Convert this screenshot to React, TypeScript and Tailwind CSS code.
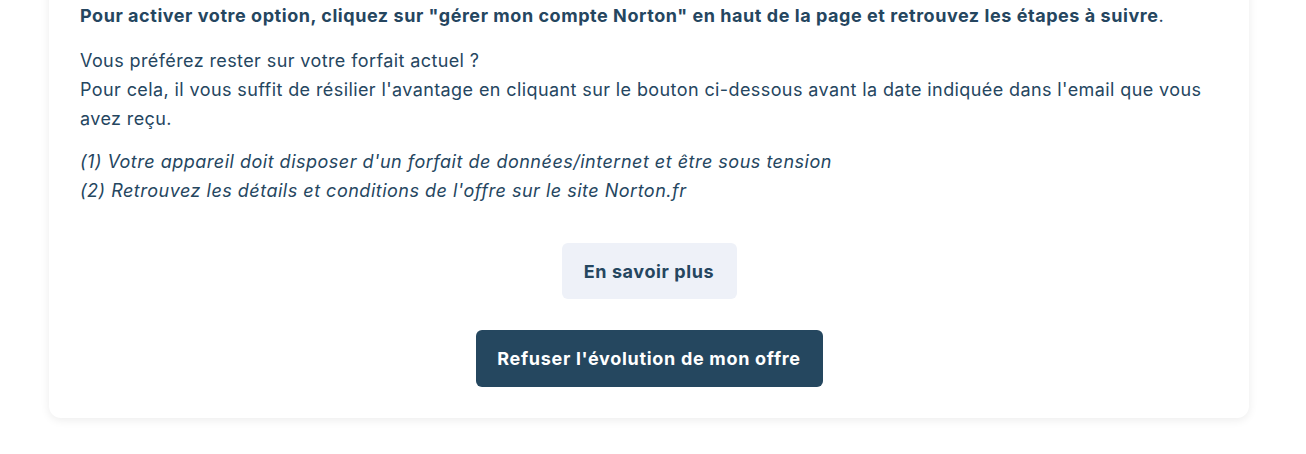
export default function App() {
  return (
    <div className="min-h-screen bg-white" style={{ fontFamily: "Inter, 'Open Sans', sans-serif" }}>
      <div className="mx-[49px] w-[1200px] -mt-[21px] rounded-xl bg-white pt-[22px] px-[31px] pb-[31px] shadow-[0_2px_10px_rgba(0,0,0,0.08)] text-[#25465f] text-[18px] leading-[29px]">
        <p className="tracking-[0.55px]">
          <strong className="font-bold">
            Pour activer votre option, cliquez sur "gérer mon compte Norton" en haut de la page et retrouvez les étapes à suivre
          </strong>
          .
        </p>
        <p className="mt-[16px] tracking-[0.4px]">
          Vous préférez rester sur votre forfait actuel ?
          <br />
          Pour cela, il vous suffit de résilier l'avantage en cliquant sur le bouton ci-dessous avant la date indiquée dans l'email que vous avez reçu.
        </p>
        <p className="mt-[14px] italic tracking-[0.5px]">
          (1) Votre appareil doit disposer d'un forfait de données/internet et être sous tension
          <br />
          (2) Retrouvez les détails et conditions de l'offre sur le site Norton.fr
        </p>
        <div className="mt-[38px] flex flex-col items-center gap-[31px]">
          <button className="h-[56px] w-[175px] rounded-md bg-[#eef1f8] font-bold text-[#25465f] tracking-[0.6px]">
            En savoir plus
          </button>
          <button className="h-[57px] w-[347px] rounded-md bg-[#25475f] font-bold text-white tracking-[0.7px]">
            Refuser l'évolution de mon offre
          </button>
        </div>
      </div>
    </div>
  );
}
